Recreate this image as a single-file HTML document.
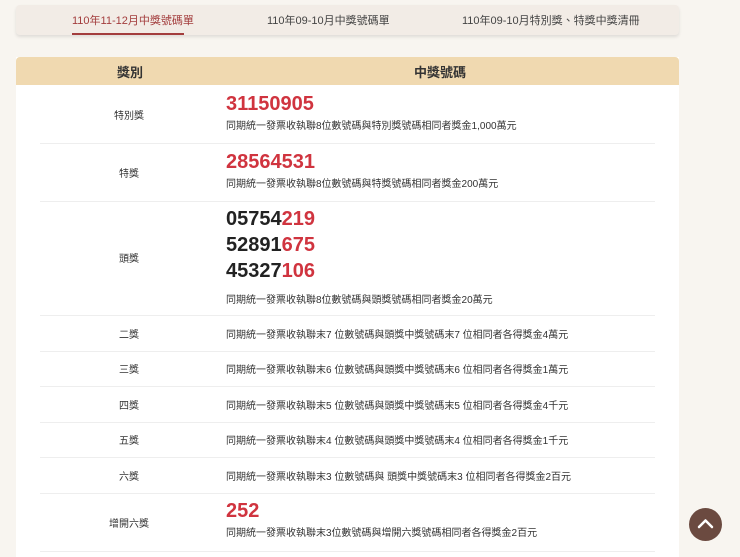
<!DOCTYPE html><html><head><meta charset="utf-8"><style>
body{margin:0;width:740px;height:551px;background:#f8f5f0;font-family:"Liberation Sans","Noto Sans CJK TC",sans-serif;position:relative;overflow:hidden;color:#333}
.tabs{position:absolute;left:16px;top:5px;width:663px;height:30px;background:#f2ece6;border-radius:4px;box-shadow:0 2px 3px rgba(0,0,0,.1);font-size:11px;color:#444}
.tabs span{position:absolute;top:7px}
.tbl{position:absolute;left:16px;top:57px;width:663px;height:500px;background:#fff}
.hd{height:28px;background:#f0d9b0;border-radius:4px 4px 0 0;font-size:13px;font-weight:bold;color:#333;position:relative}
.hd span{position:absolute;top:5px}
.row{position:absolute;left:24px;width:615px;border-bottom:1px solid #eee}
.lb{position:absolute;left:0;width:178px;text-align:center;font-size:10px;color:#333}
.ct{position:absolute;left:186px;font-size:10px;color:#333;white-space:nowrap}
.n{font-size:20px;font-weight:bold;line-height:26px;color:#222}
.r{color:#d0343f}
.up{position:absolute;left:689px;top:508px;width:33px;height:33px;border-radius:50%;background:#6b4a40}
</style></head><body>
<div style="position:absolute;left:16px;top:8px;font-size:6px;color:#b44">==</div>
<div class="tabs">
<span style="left:56px;color:#a33d3d">110年11-12月中獎號碼單</span>
<div style="position:absolute;left:56px;top:28px;width:112px;height:2px;background:#a33d3d"></div>
<span style="left:251px">110年09-10月中獎號碼單</span>
<span style="left:446px">110年09-10月特別獎、特獎中獎清冊</span>
</div>
<div class="tbl">
<div class="hd"><span style="left:101px">獎別</span><span style="left:398px">中獎號碼</span></div>
<div class="row" style="top:28px;height:58px"><div class="lb" style="top:22px">特別獎</div><div class="ct" style="top:6px"><div class="n r">31150905</div><div>同期統一發票收執聯8位數號碼與特別獎號碼相同者獎金1,000萬元</div></div></div>
<div class="row" style="top:87px;height:57px"><div class="lb" style="top:21px">特獎</div><div class="ct" style="top:5px"><div class="n r">28564531</div><div>同期統一發票收執聯8位數號碼與特獎號碼相同者獎金200萬元</div></div></div>
<div class="row" style="top:145px;height:113px"><div class="lb" style="top:48px">頭獎</div><div class="ct" style="top:4px"><div class="n">05754<span class="r">219</span></div><div class="n">52891<span class="r">675</span></div><div class="n">45327<span class="r">106</span></div><div style="margin-top:7px">同期統一發票收執聯8位數號碼與頭獎號碼相同者獎金20萬元</div></div></div>
<div class="row" style="top:259px;height:35px"><div class="lb" style="top:10px">二獎</div><div class="ct" style="top:10px">同期統一發票收執聯末7 位數號碼與頭獎中獎號碼末7 位相同者各得獎金4萬元</div></div>
<div class="row" style="top:294px;height:35px"><div class="lb" style="top:10px">三獎</div><div class="ct" style="top:10px">同期統一發票收執聯末6 位數號碼與頭獎中獎號碼末6 位相同者各得獎金1萬元</div></div>
<div class="row" style="top:330px;height:35px"><div class="lb" style="top:10px">四獎</div><div class="ct" style="top:10px">同期統一發票收執聯末5 位數號碼與頭獎中獎號碼末5 位相同者各得獎金4千元</div></div>
<div class="row" style="top:365px;height:35px"><div class="lb" style="top:10px">五獎</div><div class="ct" style="top:10px">同期統一發票收執聯末4 位數號碼與頭獎中獎號碼末4 位相同者各得獎金1千元</div></div>
<div class="row" style="top:401px;height:35px"><div class="lb" style="top:10px">六獎</div><div class="ct" style="top:10px">同期統一發票收執聯末3 位數號碼與 頭獎中獎號碼末3 位相同者各得獎金2百元</div></div>
<div class="row" style="top:436px;height:58px"><div class="lb" style="top:22px">增開六獎</div><div class="ct" style="top:5px"><div class="n r">252</div><div>同期統一發票收執聯末3位數號碼與增開六獎號碼相同者各得獎金2百元</div></div></div>
</div>
<div class="up"><svg width="33" height="33" viewBox="0 0 33 33"><path d="M10 19 L16.5 12.5 L23 19" fill="none" stroke="#fff" stroke-width="2.5" stroke-linecap="round" stroke-linejoin="round"/></svg></div>
</body></html>
